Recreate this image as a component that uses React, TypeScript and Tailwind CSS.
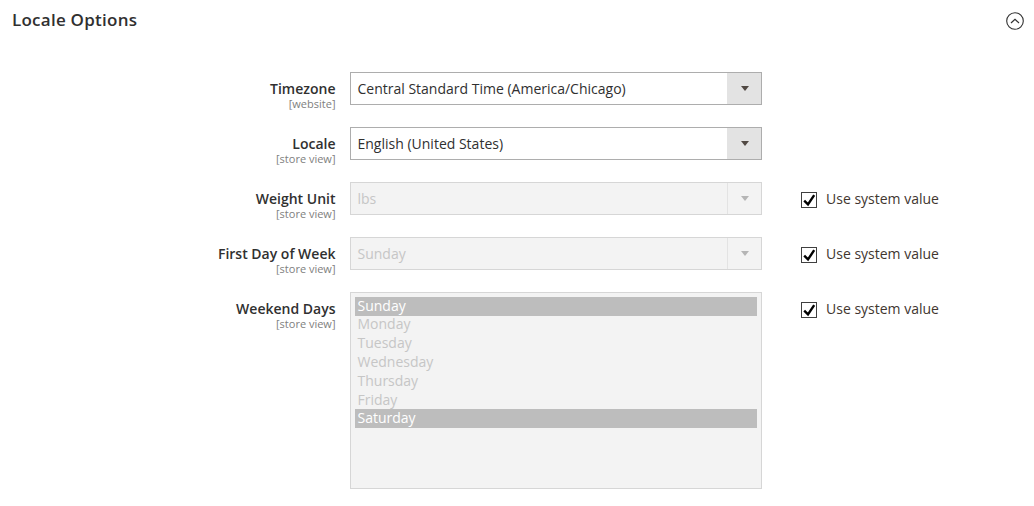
type Row = {
  label: string;
  scope: string;
  value: string;
  disabled?: boolean;
};

const rows: Row[] = [
  { label: "Timezone", scope: "[website]", value: "Central Standard Time (America/Chicago)" },
  { label: "Locale", scope: "[store view]", value: "English (United States)" },
  { label: "Weight Unit", scope: "[store view]", value: "lbs", disabled: true },
  { label: "First Day of Week", scope: "[store view]", value: "Sunday", disabled: true },
];

const days = ["Sunday", "Monday", "Tuesday", "Wednesday", "Thursday", "Friday", "Saturday"];
const selectedDays = ["Sunday", "Saturday"];

function FieldLabel({ label, scope }: { label: string; scope: string }) {
  return (
    <div className="h-[33px] w-[335.5px] shrink-0 pt-[7px] text-right">
      <div className="text-[14px] leading-[20px] font-semibold text-[#303030]">{label}</div>
      <div className="mt-[-2px] text-[11px] leading-[13px] text-[#808080]">{scope}</div>
    </div>
  );
}

function UseSystemValue() {
  return (
    <label className="ml-[39px] flex h-[33px] items-center">
      <span className="mt-[2px] flex h-[16px] w-[16px] items-center justify-center border border-[#404040] bg-white">
        <svg viewBox="0 0 14 14" className="h-[14px] w-[14px]" aria-hidden="true">
          <path d="M2.2 7.6 L6 11.4 L12.2 2.2" fill="none" stroke="#000" strokeWidth="2.4" />
        </svg>
      </span>
      <span className="ml-[9px] text-[14px] text-[#41362f]">Use system value</span>
    </label>
  );
}

function SelectField({ value, disabled }: { value: string; disabled?: boolean }) {
  return (
    <div
      className={`ml-[14.5px] flex h-[33px] w-[412px] items-center border ${
        disabled ? "border-[#d6d6d6] bg-[#f3f3f3]" : "border-[#adadad] bg-white"
      }`}
    >
      <span className={`flex-1 pl-[6.5px] text-[14px] ${disabled ? "text-[#c6c6c6]" : "text-[#303030]"}`}>{value}</span>
      <span
        className={`flex h-full w-[34px] items-center justify-center border-l ${
          disabled ? "border-[#e3e3e3] bg-[#f3f3f3]" : "border-[#e3e3e3] bg-[#e3e3e3]"
        }`}
      >
        <span
          className={`h-0 w-0 border-x-[4px] border-t-[5px] border-x-transparent ${
            disabled ? "border-t-[#b5b5b5]" : "border-t-[#514943]"
          }`}
        />
      </span>
    </div>
  );
}

export default function App() {
  return (
    <div className="h-[506px] w-[1034px] overflow-hidden bg-white font-['Open_Sans',sans-serif]">
      <div className="flex h-[72px] items-start justify-between pl-[12px] pr-[10px] pt-[8px]">
        <h2 className="text-[17px] leading-[23px] font-semibold tracking-[0.25px] text-[#303030]">Locale Options</h2>
        <svg viewBox="0 0 18 18" className="mt-[4px] h-[18px] w-[18px]" aria-hidden="true">
          <circle cx="9" cy="9" r="8.3" fill="none" stroke="#303030" strokeWidth="1.1" />
          <path d="M5 11 L9 7.4 L13 11" fill="none" stroke="#303030" strokeWidth="1.2" />
        </svg>
      </div>
      <div className="flex flex-col gap-[22px]">
        {rows.map((row) => (
          <div key={row.label} className="flex">
            <FieldLabel label={row.label} scope={row.scope} />
            <SelectField value={row.value} disabled={row.disabled} />
            {row.disabled && <UseSystemValue />}
          </div>
        ))}
        <div className="flex items-start">
          <FieldLabel label="Weekend Days" scope="[store view]" />
          <div className="ml-[14.5px] h-[197px] w-[412px] border border-[#d6d6d6] bg-[#f3f3f3] px-[4px] pt-[3.6px]">
            {days.map((day) => (
              <div
                key={day}
                className={`mb-[-0.2px] h-[19px] pl-[2.5px] text-[14px] leading-[18.6px] ${
                  selectedDays.includes(day) ? "bg-[#bdbdbd] text-white" : "text-[#c6c6c6]"
                }`}
              >
                {day}
              </div>
            ))}
          </div>
          <UseSystemValue />
        </div>
      </div>
    </div>
  );
}
